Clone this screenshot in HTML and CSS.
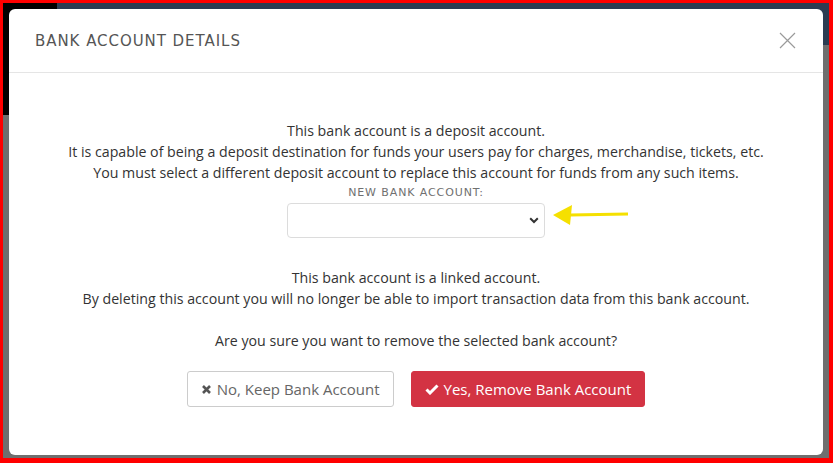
FILE: index.html
```html
<!doctype html>
<html>
<head>
	<title>Bank Account Details</title>
	<meta charset="utf-8"/>
	<link rel="stylesheet" href="styles.css">
</head>
<body>
	<div class="frame">
		<div class="modal">
			<div class="modal-header">
				<h4 class="modal-title">BANK ACCOUNT DETAILS</h4>
				<button class="close" type="button">
					<svg width="17" height="17" viewBox="0 0 17 17"><path d="M1 1 L16 16 M16 1 L1 16" stroke="#9a9a9a" stroke-width="1.2" fill="none"/></svg>
				</button>
			</div>

			<div class="modal-body">
				<p class="msg">
					This bank account is a deposit account.<br>
					It is capable of being a deposit destination for funds your users pay for charges, merchandise, tickets, etc.<br>
					You must select a different deposit account to replace this account for funds from any such items.
				</p>

				<label class="field-label">NEW BANK ACCOUNT:</label>
				<div class="select-row">
					<div class="select">
						<svg width="10" height="7" viewBox="0 0 10 7"><path d="M1.2 1.3 L5 5 L8.8 1.3" stroke="#333" stroke-width="2" fill="none"/></svg>
					</div>
					<!-- pointer arrow -->
					<svg class="arrow" width="78" height="24" viewBox="0 0 78 24"><path d="M76 11 L18 12" stroke="#f5e000" stroke-width="3" fill="none"/><path d="M1 12 L20 2 L18 22 Z" fill="#f5e000"/></svg>
				</div>

				<p class="msg linked">
					This bank account is a linked account.<br>
					By deleting this account you will no longer be able to import transaction data from this bank account.
				</p>

				<p class="msg confirm">Are you sure you want to remove the selected bank account?</p>

				<div class="actions">
					<button class="btn btn-default" type="button">
						<svg width="11" height="11" viewBox="0 0 11 11"><path d="M2 2 L9 9 M9 2 L2 9" stroke="#555" stroke-width="2.6" fill="none"/></svg>
						No, Keep Bank Account
					</button>
					<button class="btn btn-danger" type="button">
						<svg width="14" height="11" viewBox="0 0 14 11"><path d="M1.5 5.5 L5 9 L12.5 1.5" stroke="#fff" stroke-width="3" fill="none"/></svg>
						Yes, Remove Bank Account
					</button>
				</div>
			</div>
		</div>
	</div>
</body>
</html>
```

FILE: styles.css
```css
html, body{
	margin: 0;
	padding: 0;
}
body{
	width: 833px;
	height: 463px;
	overflow: hidden;
	background-color: #ff0000;
}
.frame{
	box-sizing: border-box;
	width: 833px;
	height: 463px;
	border-style: solid;
	border-color: #ff0000;
	border-width: 3px 4px 5px 3px;
	padding: 6px 6px 3px 6px;
	/* dimmed page behind the dialog */
	background:
		linear-gradient(#000, #000) 0 0 / 54px 112px no-repeat,
		linear-gradient(#2b3c52, #2b3c52) 0 0 / 100% 42px no-repeat,
		#6f6f6f;
}
.modal{
	height: 100%;
	background-color: #fff;
	border-radius: 6px;
	font-family: 'Open Sans', sans-serif;
	color: #333;
}
.modal-header{
	display: flex;
	align-items: center;
	justify-content: space-between;
	height: 63px;
	padding: 0 26px;
	border-bottom: 1px solid #e5e5e5;
}
.modal-title{
	margin: 0;
	font-family: 'DejaVu Sans', sans-serif;
	font-weight: normal;
	font-size: 15px;
	letter-spacing: 0.95px;
	color: #555;
}
.close{
	border: none;
	background: none;
	padding: 0;
	margin-right: 1px;
	display: flex;
}
.modal-body{
	padding-top: 47px;
	display: flex;
	flex-direction: column;
	align-items: center;
}
.msg{
	margin: 0;
	font-size: 14.2px;
	line-height: 21px;
	text-align: center;
}
.field-label{
	font-family: 'DejaVu Sans', sans-serif;
	font-size: 11px;
	letter-spacing: 0.9px;
	color: #707070;
	margin-top: 3px;
	line-height: 14px;
}
.select-row{
	position: relative;
	margin-top: 3px;
}
.select{
	box-sizing: border-box;
	width: 258px;
	height: 35px;
	border: 1px solid #dcdcdc;
	border-radius: 4px;
	display: flex;
	align-items: center;
	justify-content: flex-end;
	padding-right: 5px;
}
.arrow{
	position: absolute;
	left: 265px;
	top: 0px;
}
.linked{
	margin-top: 29px;
}
.confirm{
	margin-top: 21px;
}
.actions{
	display: flex;
	gap: 17px;
	margin-top: 20px;
}
.btn{
	display: flex;
	align-items: center;
	gap: 5px;
	height: 36px;
	padding: 0 13px;
	border-radius: 3px;
	font-family: 'Open Sans', sans-serif;
	font-size: 15px;
}
.btn-default{
	background-color: #fff;
	border: 1px solid #ccc;
	color: #666;
}
.btn-danger{
	background-color: #d33343;
	border: 1px solid #d33343;
	color: #fff;
}
```
